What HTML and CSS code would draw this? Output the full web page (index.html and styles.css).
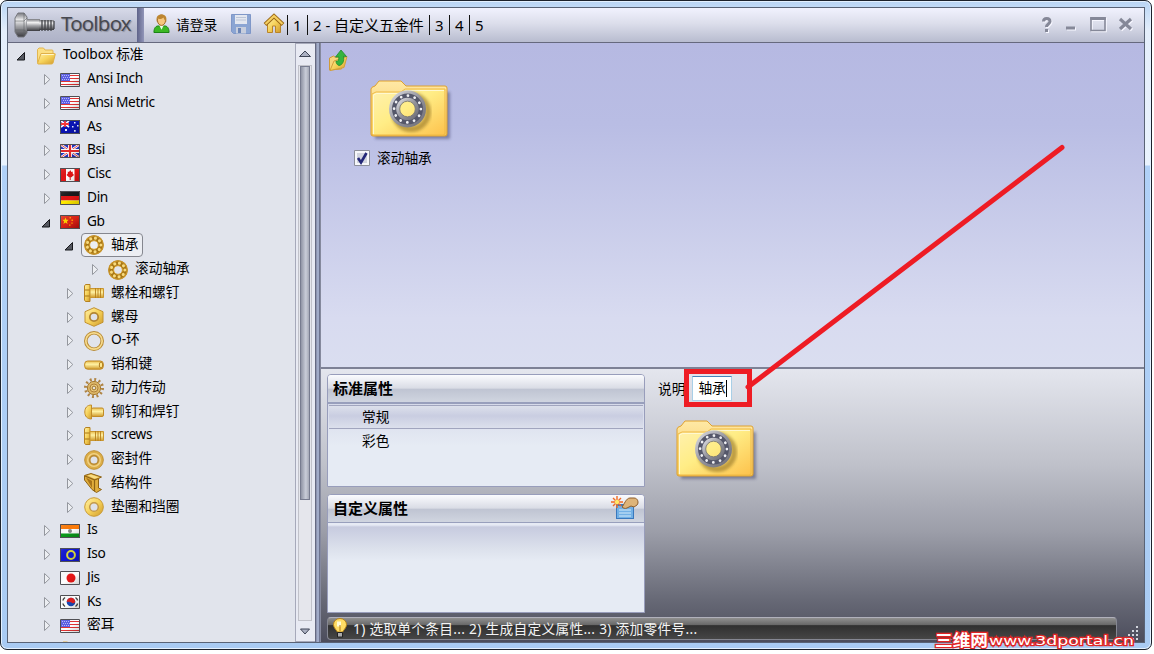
FILE: index.html
```html
<!DOCTYPE html>
<html lang="zh-CN">
<head>
<meta charset="utf-8">
<title>Toolbox</title>
<link rel="stylesheet" href="styles.css">
</head>
<body>
<svg class="defs" width="0" height="0" aria-hidden="true">
  <defs>
    <linearGradient id="gold" x1="0" y1="0" x2="1" y2="1"><stop offset="0" stop-color="#fff0a8"/><stop offset=".5" stop-color="#f6d25a"/><stop offset="1" stop-color="#cf9a2c"/></linearGradient>
    <linearGradient id="goldv" x1="0" y1="0" x2="0" y2="1"><stop offset="0" stop-color="#e8bb4c"/><stop offset=".4" stop-color="#fff2a4"/><stop offset="1" stop-color="#d09a2a"/></linearGradient>
    <linearGradient id="folderg" x1="0" y1="0" x2="1" y2="1"><stop offset="0" stop-color="#fff1b0"/><stop offset=".45" stop-color="#ffed86"/><stop offset="1" stop-color="#fdc24c"/></linearGradient>
    <linearGradient id="foldertab" x1="0" y1="0" x2="0" y2="1"><stop offset="0" stop-color="#ffe9a6"/><stop offset="1" stop-color="#f4c352"/></linearGradient>
    <linearGradient id="steel" x1="0" y1="0" x2="0" y2="1"><stop offset="0" stop-color="#77787e"/><stop offset=".3" stop-color="#f2f2f3"/><stop offset=".55" stop-color="#a5a6aa"/><stop offset="1" stop-color="#3a3a3f"/></linearGradient>
    <linearGradient id="ring" x1="0" y1="0" x2="1" y2="1"><stop offset="0" stop-color="#dcdce2"/><stop offset=".5" stop-color="#94949d"/><stop offset="1" stop-color="#6d6d77"/></linearGradient>
    <linearGradient id="shade" x1="0" y1="0" x2="1" y2="1"><stop offset="0" stop-color="#fff" stop-opacity=".12"/><stop offset=".5" stop-color="#000" stop-opacity="0"/><stop offset="1" stop-color="#000" stop-opacity=".2"/></linearGradient>
    <linearGradient id="redline" x1="0" y1="0" x2="1" y2="1"><stop offset="0" stop-color="#f03a22"/><stop offset="1" stop-color="#c00c0c"/></linearGradient>
    <filter id="soft" x="-10%" y="-20%" width="120%" height="140%"><feGaussianBlur stdDeviation="1.5"/></filter>
  </defs>
  <symbol id="closed" viewBox="0 0 12 14"><path d="M4.500 1.500v10L9.800 6.500z" fill="#eceef2" stroke="#94979e"/></symbol>
  <symbol id="open" viewBox="0 0 12 14"><path d="M9.500 3.500v7.500H2z" fill="#555860" stroke="#17181c"/></symbol>
  <symbol id="frame" viewBox="0 0 20 14"><path d="M0 0h20v14H0z" fill="url(#shade)"/><path d="M.5.5h19v13H.5z" fill="none" stroke="#4f4f54"/></symbol>
  <symbol id="us" viewBox="0 0 20 14"><path d="M0 0h20v14H0z" fill="#fff"/><path d="M1 2.500h18M1 5.500h18M1 8.500h18M1 11.500h18" stroke="#e23434" stroke-width="1.200"/><path d="M1 1h9v7H1z" fill="#5a5ee8"/><path d="M2 2.500h8M3 4.500h7M2 6.500h8" stroke="#b9bbff" stroke-dasharray="1 1"/><use href="#frame"/></symbol>
  <symbol id="au" viewBox="0 0 20 14"><path d="M0 0h20v14H0z" fill="#0a14b4"/><path d="M1 1l8 6M9 1L1 7" stroke="#fff" stroke-width="1.600"/><path d="M5 1v6M1 4h8" stroke="#f33" stroke-width="1.800"/><path d="M5 9h2v2H5zM14 2h1.500v1.500H14zM17 5h1.500v1.500H17zM12 6h1.500v1.500H12zM14 10h1.700v1.700H14z" fill="#e6ecff"/><use href="#frame"/></symbol>
  <symbol id="uk" viewBox="0 0 20 14"><path d="M0 0h20v14H0z" fill="#2430c0"/><path d="M0 0l20 14M20 0L0 14" stroke="#fff" stroke-width="2.400"/><path d="M0 0l20 14M20 0L0 14" stroke="#e13939" stroke-width=".9"/><path d="M10 0v14M0 7h20" stroke="#fff" stroke-width="4"/><path d="M10 0v14M0 7h20" stroke="#e62b2b" stroke-width="2.200"/><use href="#frame"/></symbol>
  <symbol id="ca" viewBox="0 0 20 14"><path d="M0 0h20v14H0z" fill="#e31515"/><path d="M6 0h8.500v14H6z" fill="#fff"/><path d="M10.200 2l1.200 2 1.300-.6v2l1.300 1.600-2.600 2.200h-.7V12h-1V9.200H9L6.500 7l1.300-1.600v-2L9 4z" fill="#e01515"/><use href="#frame"/></symbol>
  <symbol id="de" viewBox="0 0 20 14"><path d="M0 0h20v5H0z" fill="#19191b"/><path d="M0 5h20v4.500H0z" fill="#e01414"/><path d="M0 9.500h20V14H0z" fill="#ffea00"/><use href="#frame"/></symbol>
  <symbol id="cn" viewBox="0 0 20 14"><path d="M0 0h20v14H0z" fill="url(#redline)"/><path d="M5.500 2.500l.9 2.300h2.300L6.900 6.400l.7 2.500-2.100-1.500-2.100 1.500.7-2.500-1.800-1.600h2.300z" fill="#ffd500"/><path d="M9.500 2h1.500v1.400H9.500zM11.500 4.500h1.400v1.400h-1.400zM11.300 7.500h1.400v1.300h-1.400zM9 9.500h1.500v1.300H9z" fill="#ff9e00"/><use href="#frame"/></symbol>
  <symbol id="in" viewBox="0 0 20 14"><path d="M0 0h20v5H0z" fill="#ff7c08"/><path d="M0 5h20v4.500H0z" fill="#fff"/><path d="M0 9.500h20V14H0z" fill="#0a9a1a"/><circle cx="10" cy="7" r="2" fill="#888"/><use href="#frame"/></symbol>
  <symbol id="iso" viewBox="0 0 20 14"><path d="M0 0h20v14H0z" fill="#1117d4"/><circle cx="11" cy="7" r="3.900" fill="none" stroke="#d8d83c" stroke-width="2"/><use href="#frame"/></symbol>
  <symbol id="jp" viewBox="0 0 20 14"><path d="M0 0h20v14H0z" fill="#fff"/><circle cx="11" cy="7" r="4.500" fill="#e81717"/><use href="#frame"/></symbol>
  <symbol id="kr" viewBox="0 0 20 14"><path d="M0 0h20v14H0z" fill="#fff"/><circle cx="11" cy="7" r="4.300" fill="#1a48b4"/><path d="M6.700 7a4.300 4.300 0 0 1 8.600 0c-1.500 1.800-3 1.500-4 .5s-3-1-4.600-.5z" fill="#df2020"/><path d="M5 2.500Q3 4 3 5.500M5 11.500Q3 10 3 8.500M15.500 2.500q2 1.500 2 3M15.500 11.500q2-1.500 2-3" stroke="#444" stroke-width="1.500" fill="none"/><use href="#frame"/></symbol>
  <symbol id="bearing" viewBox="0 0 20 20"><circle cx="10" cy="10" r="6.900" fill="none" stroke="#a87716" stroke-width="5.600"/><circle cx="10" cy="10" r="9.200" fill="none" stroke="#c99428" stroke-width="1.300"/><circle cx="10" cy="10" r="4.400" fill="none" stroke="#d9a436" stroke-width="1"/><circle cx="10" cy="10" r="6.900" fill="none" stroke="#f8da7c" stroke-width="3" stroke-linecap="round" stroke-dasharray=".1 4.717"/></symbol>
  <symbol id="bolt" viewBox="0 0 20 20"><path d="M1.500 1.500h4.500v17H1.500L.5 17V3z" fill="url(#gold)" stroke="#b58120"/><path d="M1 7h5M1 13h5" stroke="#a97718"/><path d="M6 5.500h13.500v9H6z" fill="url(#goldv)" stroke="#c9962f"/><path d="M11.500 5v10M14 5v10M16.500 5v10" stroke="#b77f1b" stroke-width=".9"/></symbol>
  <symbol id="nut" viewBox="0 0 20 20"><path d="M10 .7l9 4v10.600l-9 4-9-4V4.700z" fill="url(#gold)" stroke="#c2922e"/><circle cx="10" cy="10" r="4.200" fill="#dfe2ea" stroke="#b28633" stroke-width="1.800"/></symbol>
  <symbol id="oring" viewBox="0 0 20 20"><circle cx="10" cy="10" r="8.200" fill="none" stroke="#b98c37" stroke-width="3.600"/><circle cx="10" cy="10" r="8.200" fill="none" stroke="#f6da8c" stroke-width="1.700"/></symbol>
  <symbol id="pin" viewBox="0 0 20 20"><rect x=".7" y="6" width="18.600" height="8.200" rx="3" fill="url(#goldv)" stroke="#c08820"/><ellipse cx="17" cy="10" rx="1.700" ry="3" fill="#ffe990" stroke="#b17d1d"/></symbol>
  <symbol id="gear" viewBox="0 0 20 20"><circle cx="10" cy="10" r="8.500" fill="none" stroke="#b08443" stroke-width="3" stroke-dasharray="1.900 2.550"/><circle cx="10" cy="10" r="6.600" fill="#dcb668" stroke="#a67b33"/><circle cx="10" cy="10" r="4" fill="#edce82" stroke="#b0803a"/><circle cx="10" cy="10" r="1.900" fill="#e7e2d8" stroke="#9d722b"/></symbol>
  <symbol id="rivet" viewBox="0 0 20 20"><path d="M7.500 3C3 3 .8 6 .8 10s2.200 7 6.700 7z" fill="url(#gold)" stroke="#c08b28"/><rect x="7.500" y="6" width="12" height="8.500" rx="1.500" fill="url(#goldv)" stroke="#c18c27"/></symbol>
  <symbol id="seal" viewBox="0 0 20 20"><circle cx="10" cy="10" r="9.300" fill="#dcae48" stroke="#bf8f34"/><circle cx="10" cy="10" r="6.300" fill="none" stroke="#f1d389" stroke-width="1.300"/><circle cx="10" cy="10" r="4.200" fill="#dfe2ea" stroke="#b68733" stroke-width="1.400"/></symbol>
  <symbol id="beam" viewBox="0 0 20 20"><path d="M.5 2.500L7 .5l10.500 3.500-3 1.500v9.500l3 1.500-5 3-4.500-3L.5 7z" fill="#e0ad3c" stroke="#8e6315"/><path d="M1 3l9.500 4v11.500M10.500 7l4-1.500" stroke="#8e6315" stroke-width="1.200" fill="none"/><path d="M2 4.500l6 10.500V8z" fill="#a87419"/><path d="M3.500 2.500L7 1.500l8 2.700-4.500 1.600z" fill="#f9dd83"/></symbol>
  <symbol id="washer" viewBox="0 0 20 20"><circle cx="10" cy="10" r="9.300" fill="url(#gold)" stroke="#c99b35"/><circle cx="10" cy="10" r="4.300" fill="#dfe2ea" stroke="#c39a4c" stroke-width="1.500"/></symbol>
  <symbol id="folder" viewBox="0 0 20 20"><path d="M1.500 16.500V3.500L3 2h4.500L9 4h7q1 0 1 1v4z" fill="#fbdf84" stroke="#e2b650"/><path d="M5 7.500h13.500q1 0 .7 1L17 17q-.3 1-1.500 1H2q-.5 0-.3-1z" fill="url(#gold)" stroke="#e0b048"/><path d="M5.500 8.500h12.300" stroke="#fff7cc"/></symbol>
  <symbol id="bigfolder" viewBox="0 0 84 64"><path d="M5 12h75v47H5z" fill="#33355c" opacity=".45" filter="url(#soft)"/><path d="M1 54V9q0-2 4-3l4-5h22l5 5h39q2 0 2 2v46q0 2-2 2H3q-2 0-2-2z" fill="url(#foldertab)" stroke="#dfa12e"/><path d="M2 54V14l4-2h25l4-3h40v44q0 2-2 2H3z" fill="url(#folderg)" stroke="#efb844"/><path d="M3.500 54V15l3-1.500H32l4-3h38" stroke="#fff8d0" fill="none"/>
    <circle cx="41" cy="32" r="17" fill="none" stroke="#7e5f18" stroke-width="6" opacity=".5" filter="url(#soft)"/><circle cx="37.500" cy="29" r="13.300" fill="none" stroke="#55576a" stroke-width="8"/><circle cx="37.500" cy="29" r="17" fill="none" stroke="url(#ring)" stroke-width="3"/><circle cx="37.500" cy="29" r="13.400" fill="none" stroke="#f0f0f4" stroke-width="2.700" stroke-linecap="round" stroke-dasharray=".1 6.916"/><circle cx="37.500" cy="29" r="9.600" fill="none" stroke="url(#ring)" stroke-width="3.400"/><circle cx="37.500" cy="29" r="7.800" fill="none" stroke="#6e6e70" stroke-width=".8"/></symbol>
</svg>

<div class="window">
  <div class="client">
    <header class="titlebar">
      <div class="brand">
        <svg width="46" height="30" viewBox="0 0 46 30"><path d="M2 8l3-5h6l3 4v16l-3 4H5l-3-5z" fill="url(#steel)" stroke="#77787e"/><path d="M2 11h9l3-3M2 20h9l3 2M11 3v23" stroke="#5f6066" fill="none" opacity=".6"/><path d="M14 9h13v12H14z" fill="url(#steel)"/><path d="M26 10h15v10H26z" fill="url(#steel)"/><path d="M29 10v11M32 10v11M35 10v11M38 10v11M41 11v8" stroke="#434449" stroke-width="1.300"/></svg>
        <span class="brand-name">Toolbox</span>
      </div>
      <div class="brand-edge"></div>
      <div class="tools">
        <svg class="user" width="18" height="22" viewBox="0 0 18 22"><path d="M1 20c0-5 2-7 5-7h6c3 0 5 2 5 7z" fill="#3bb824" stroke="#158010"/><path d="M6.500 12L9 17l2.500-5z" fill="#eefbe8"/><ellipse cx="9" cy="7" rx="4.300" ry="5.500" fill="#f6c77e" stroke="#99601a"/><path d="M4 9C3 3 5 1 9 1s6 2 5 8c-1-1-2-3-3-5-2 2-5 2-6 1z" fill="#bd8631"/></svg>
        <span class="login">请登录</span>
        <svg class="save" width="20" height="20" viewBox="0 0 20 20"><path d="M.5.5h19v19h-17l-2-2z" fill="#8ba5d3" stroke="#7f97c8"/><path d="M4 1h12v9H4z" fill="#e3e7f0"/><path d="M5 3.500h10M5 6h10" stroke="#bcc5d6"/><path d="M5 13h10v6.500H5z" fill="#c7cedd"/><path d="M7 14h3v5H7z" fill="#6c85b6"/></svg>
        <svg class="home" width="20" height="20" viewBox="0 0 20 20"><path d="M3.500 9L10 3l6.500 6v9.500h-5V12h-3v6.500h-5z" fill="url(#gold)" stroke="#b98429"/><path d="M1 10.500L10 2l9 8.500" fill="none" stroke="#9b6815" stroke-width="4"/><path d="M1.500 10L10 2l8.500 8" fill="none" stroke="#f5cf61" stroke-width="2.200"/></svg>
        <nav class="steps"><a class="s1">1</a><a class="s2">2 - 自定义五金件</a><a>3</a><a>4</a><a>5</a></nav>
      </div>
      <svg class="controls" width="96" height="18" viewBox="0 0 96 18" fill="none" stroke="#858898"><path d="M5.500 5.500c0-4 6.500-4 6.500 0 0 2.500-3.500 2.500-3.500 5.500M8.500 13v3" stroke-width="3"/><path d="M28 12h9" stroke-width="3"/><path d="M53 2h14v12.500H53z" stroke-width="1.600"/><path d="M52.200 2.500h15.600" stroke-width="3"/><path d="M82 3l11 10M93 3L82 13" stroke-width="3.200"/></svg>
    </header>
    <div class="body">
      <ul class="tree">
        <li class="row l0"><svg class="arrow"><use href="#open"/></svg><svg class="icon"><use href="#folder"/></svg><span class="root">Toolbox 标准</span></li>
        <li class="row l1"><svg class="arrow"><use href="#closed"/></svg><svg class="icon flag"><use href="#us"/></svg><span>Ansi Inch</span></li>
        <li class="row l1"><svg class="arrow"><use href="#closed"/></svg><svg class="icon flag"><use href="#us"/></svg><span>Ansi Metric</span></li>
        <li class="row l1"><svg class="arrow"><use href="#closed"/></svg><svg class="icon flag"><use href="#au"/></svg><span>As</span></li>
        <li class="row l1"><svg class="arrow"><use href="#closed"/></svg><svg class="icon flag"><use href="#uk"/></svg><span>Bsi</span></li>
        <li class="row l1"><svg class="arrow"><use href="#closed"/></svg><svg class="icon flag"><use href="#ca"/></svg><span>Cisc</span></li>
        <li class="row l1"><svg class="arrow"><use href="#closed"/></svg><svg class="icon flag"><use href="#de"/></svg><span>Din</span></li>
        <li class="row l1"><svg class="arrow"><use href="#open"/></svg><svg class="icon flag"><use href="#cn"/></svg><span>Gb</span></li>
        <li class="row l2"><svg class="arrow"><use href="#open"/></svg><div class="selected"><svg class="icon"><use href="#bearing"/></svg><span>轴承</span></div></li>
        <li class="row l3"><svg class="arrow"><use href="#closed"/></svg><svg class="icon"><use href="#bearing"/></svg><span>滚动轴承</span></li>
        <li class="row l2"><svg class="arrow"><use href="#closed"/></svg><svg class="icon"><use href="#bolt"/></svg><span>螺栓和螺钉</span></li>
        <li class="row l2"><svg class="arrow"><use href="#closed"/></svg><svg class="icon"><use href="#nut"/></svg><span>螺母</span></li>
        <li class="row l2"><svg class="arrow"><use href="#closed"/></svg><svg class="icon"><use href="#oring"/></svg><span>O-环</span></li>
        <li class="row l2"><svg class="arrow"><use href="#closed"/></svg><svg class="icon"><use href="#pin"/></svg><span>销和键</span></li>
        <li class="row l2"><svg class="arrow"><use href="#closed"/></svg><svg class="icon"><use href="#gear"/></svg><span>动力传动</span></li>
        <li class="row l2"><svg class="arrow"><use href="#closed"/></svg><svg class="icon"><use href="#rivet"/></svg><span>铆钉和焊钉</span></li>
        <li class="row l2"><svg class="arrow"><use href="#closed"/></svg><svg class="icon"><use href="#bolt"/></svg><span class="screws">screws</span></li>
        <li class="row l2"><svg class="arrow"><use href="#closed"/></svg><svg class="icon"><use href="#seal"/></svg><span>密封件</span></li>
        <li class="row l2"><svg class="arrow"><use href="#closed"/></svg><svg class="icon"><use href="#beam"/></svg><span>结构件</span></li>
        <li class="row l2"><svg class="arrow"><use href="#closed"/></svg><svg class="icon"><use href="#washer"/></svg><span>垫圈和挡圈</span></li>
        <li class="row l1"><svg class="arrow"><use href="#closed"/></svg><svg class="icon flag"><use href="#in"/></svg><span>Is</span></li>
        <li class="row l1"><svg class="arrow"><use href="#closed"/></svg><svg class="icon flag"><use href="#iso"/></svg><span>Iso</span></li>
        <li class="row l1"><svg class="arrow"><use href="#closed"/></svg><svg class="icon flag"><use href="#jp"/></svg><span>Jis</span></li>
        <li class="row l1"><svg class="arrow"><use href="#closed"/></svg><svg class="icon flag"><use href="#kr"/></svg><span>Ks</span></li>
        <li class="row l1"><svg class="arrow"><use href="#closed"/></svg><svg class="icon flag"><use href="#us"/></svg><span class="mil">密耳</span></li>
        <li class="row l1"><svg class="arrow"></svg><svg class="icon"><use href="#folder"/></svg></li>
      </ul>
      <div class="scroll">
        <svg width="20" height="21" viewBox="0 0 20 21"><path d="M4.500 12.500L10 7l5.500 5.500z" fill="#abb0c2" stroke="#3f4556"/></svg>
        <div class="track"><div class="thumb"></div></div>
        <svg width="20" height="20" viewBox="0 0 20 20"><path d="M5.500 8h9L10 13z" fill="#abb0c2" stroke="#3f4556"/></svg>
      </div>
      <div class="splitter"></div>
      <main class="main">
        <section class="browser">
          <svg class="up" width="22" height="24" viewBox="0 0 22 24"><path d="M1.500 21V9l4-2 2 1.500 8-1.500-2 13z" fill="#f6d47a" stroke="#d09a38"/><path d="M6 12l13-4.500-3 11L2 21.500z" fill="url(#gold)" stroke="#d39f3a"/><path d="M7.500 8L13 1l5.500 6.500-3-.3c1 5-1 8.800-4.500 9.300C9 16 8 14 8 12c2 1 3-1 2.800-4z" fill="#35b43d" stroke="#1d8a2a" stroke-width=".8"/></svg>
          <div class="item">
            <svg class="big" width="84" height="64"><use href="#bigfolder"/></svg>
            <label class="check"><svg width="16" height="16" viewBox="0 0 16 16"><path d="M.5.500h15v15H.5z" fill="#f6f7fa" stroke="#8c8f9b"/><path d="M3 3h10v10H3z" fill="#d2d5df"/><path d="M4 8l3 4.500L12.500 3" fill="none" stroke="#242878" stroke-width="2.600"/></svg><span>滚动轴承</span></label>
          </div>
        </section>
        <section class="details">
          <div class="props">
            <div class="panel first">
              <h2>标准属性</h2>
              <div class="panel-body"><div class="prop current">常规</div><div class="prop">彩色</div></div>
            </div>
            <div class="panel second">
              <h2>自定义属性<svg width="28" height="24" viewBox="0 0 28 24"><path d="M5 8h18v15H5z" fill="#3978bd"/><path d="M6 10h16v12H6z" fill="#72b0e5"/><path d="M8 14h12M8 17h12M8 20h12" stroke="#d4ebfa"/><path d="M11 11c2-2 4-9 8-9h4c4 0 5 5 3 7l-3 2-3-1-4 2c-2 1-4 0-5-1z" fill="#deb479" stroke="#8e5d2b"/><path d="M6 0v12M0 6h12M2 2l8 8M10 2l-8 8" stroke="#f36a20" stroke-width="1.400"/><circle cx="6" cy="6" r="2.200" fill="#ffe969"/></svg></h2>
              <div class="panel-body"></div>
            </div>
          </div>
          <div class="preview">
            <div class="field"><span>说明</span><div class="input">轴承<i class="caret"></i></div></div>
            <svg class="big" width="84" height="64"><use href="#bigfolder"/></svg>
          </div>
          <footer class="hint"><svg width="14" height="21" viewBox="0 0 14 21"><path d="M4.500 14C2 10.500.5 9 .5 6.500a6.500 6 0 0 1 13 0C13.500 9 12 10.500 9.500 14z" fill="#ffdd65" stroke="#b7841a"/><path d="M4 3.500h4v5H4z" fill="#fffbd5"/><path d="M7 7v6" stroke="#b37812"/><path d="M4.500 14.500h5v4.500h-5z" fill="#aaa" stroke="#222"/></svg><span>1) 选取单个条目... 2) 生成自定义属性... 3) 添加零件号...</span></footer>
          <svg class="grip" width="11" height="14" viewBox="0 0 11 14" fill="#d4d7df"><path d="M8 0h2v2H8zM8 4h2v2H8zM4 4h2v2H4zM8 8h2v2H8zM4 8h2v2H4zM0 8h2v2H0zM8 12h2v2H8zM4 12h2v2H4zM0 12h2v2H0z"/></svg>
        </section>
      </main>
    </div>
  </div>
</div>
<svg class="markup" width="1154" height="654" viewBox="0 0 1154 654">
  <path d="M748 387L1062 147.500" stroke="#ee1c24" stroke-width="5" stroke-linecap="round"/>
  <path d="M686.500 371.500h63v33h-63z" fill="none" stroke="#ee1c24" stroke-width="5"/>
  <text class="watermark cjk" x="935" y="646" textLength="53" lengthAdjust="spacingAndGlyphs">三维网</text>
  <text class="watermark" x="989" y="645" textLength="145" lengthAdjust="spacingAndGlyphs">www.3dportal.cn</text>
</svg>
</body>
</html>
```
FILE: styles.css
```css
* { box-sizing: border-box; }
body {
  margin: 0;
  width: 1154px;
  height: 654px;
  overflow: hidden;
  background: #fff;
  color: #000;
  font: 13.7px/1 "Noto Sans", "Noto Sans CJK SC", sans-serif;
}
svg { display: block; flex: none; overflow: visible; }
.defs { position: absolute; }
span, a { white-space: nowrap; }

.window {
  width: 1152px;
  height: 650px;
  padding: 6px;
  border: 1px solid #1d232d;
  border-radius: 7px;
  background: linear-gradient(#b9d5f5 0, #e4eefb 30px, #e9f3fe 164px, #b0d1f8 165px, #a9cbf3 100%);
  box-shadow: inset 0 0 0 1px #e4f1ff;
}
.client {
  display: flex;
  flex-direction: column;
  width: 1138px;
  height: 636px;
  border: 1px solid #596376;
}

/* Title bar */
.titlebar {
  display: flex;
  height: 35px;
  background: linear-gradient(#f1f2fe, #dcdeeb 45%, #b8bccf);
  border-bottom: 1px solid #66697e;
}
.brand {
  display: flex;
  align-items: center;
  width: 129px;
  padding-left: 5px;
  background: linear-gradient(#d7dae9, #b9bdcf 60%, #aeb2c7);
}
.brand svg { margin-top: -1px; }
.brand-name { margin: -3px 0 0 2px; font-size: 20.5px; letter-spacing: -.8px; color: #484950; text-shadow: 1px 1px 1px #8d90a1; }
.brand-edge { width: 7px; background: linear-gradient(90deg, #5f6389, #9195b8); }
.tools { display: flex; flex: 1; align-items: flex-start; padding-left: 9px; }
.user { margin-top: 5px; width: 17px; }
.login { margin: 10px 0 0 6px; }
.save { margin: 6px 0 0 14px; }
.home { margin: 6px 0 0 13px; }
.steps { display: flex; margin: 7px 0 0 3px; font-size: 15px; line-height: 20px; }
.steps a { width: 20px; padding-left: 5px; border-left: 1px solid #111; }
.steps .s2 { width: 122px; letter-spacing: -.05px; }
.controls { margin: 8px 10px 0 0; filter: drop-shadow(1px 1px 0 #f6f6ff); }

/* Component tree */
.body { display: flex; flex: 1; min-height: 0; }
.tree { width: 287px; height: 599px; margin: 0; padding: 0; overflow: hidden; list-style: none; background: #e1e4ec; }
.row { display: flex; align-items: center; height: 23.75px; }
.row span { margin-left: 7px; line-height: 20px; margin-top: -1px; }
.row .root { letter-spacing: -.1px; }
.l0 { padding-left: 9px; }
.l1 { padding-left: 32px; }
.l1 span { letter-spacing: -.36px; }
.l1 .mil { letter-spacing: 0; }
.l2 { padding-left: 55px; }
.l2 .screws { letter-spacing: -.35px; }
.l3 { padding-left: 80px; }
.arrow { width: 12px; height: 14px; margin-right: 8px; margin-top: 3px; }
.l2 .arrow { margin-right: 9px; }
.l0 .arrow { margin-left: -2px; margin-right: 9px; }
.icon { width: 20px; height: 20px; margin-top: 2px; }
.flag { height: 14px; margin-top: 2px; }
.selected {
  display: flex;
  align-items: center;
  height: 24px;
  margin: 1px 0 0 -3px;
  padding: 0 4px 0 2px;
  border: 1px solid #85878f;
  border-radius: 4px;
  background: #eceef3;
}
.selected .icon { margin-top: 0; }
.selected span { margin-top: -3px; }

.scroll { display: flex; flex-direction: column; width: 20px; height: 599px; border: 1px solid #a6a9ba; border-width: 1px 0 1px 1px; background: #e8eaf3; }
.scroll > svg { margin-left: -1px; }
.track { flex: 1; width: 14px; margin-left: 2px; padding: 0 1px; border: 1px solid #c1c2ca; background: #e5e6ec; }
.thumb { height: 434px; border: 1px solid #777c90; background: linear-gradient(90deg, #8f94a5, #c9cdd9 60%, #a4a8b6); }
.splitter { width: 6px; background: linear-gradient(90deg, #656981 0 1px, #8d94af 1px 2px, #a1abc8 2px 4px, #6e7490 4px 5px, #85899d 5px); }

/* Browser pane */
.main { display: flex; flex: 1; flex-direction: column; }
.browser { display: flex; align-items: flex-start; height: 326px; padding: 6px 0 0 7px; border-bottom: 2px solid #7d8195; background: linear-gradient(#b6b9e2, #b9bde4 25%, #d8dbf0 85%, #dadef0); }
.item { margin: 31px 0 0 4px; }
.item .big { margin-left: 16px; }
.check { display: flex; margin-top: 5px; height: 17px; align-items: center; }
.check span { margin-left: 7px; line-height: 16px; }

/* Details pane */
.details {
  display: grid;
  grid-template-columns: 318px 1fr 14px;
  grid-template-rows: 248px 23px;
  flex: 1;
  padding-left: 6px;
  background: linear-gradient(#e4e6ee 0, #bfc1ca 35%, #9b9da8 60%, #666875 85%, #4c4d5c);
}
.props { padding-top: 5px; }
.panel { display: flex; flex-direction: column; border: 1px solid #989dbb; border-radius: 4px 4px 0 0; background: #e6ebf4; }
.first { height: 113px; }
.second { height: 119px; margin-top: 7px; }
.panel h2 {
  display: flex;
  justify-content: space-between;
  height: 28px;
  margin: 0;
  padding: 0 5px;
  border-bottom: 1px solid #989fbc;
  border-radius: 3px 3px 0 0;
  background: linear-gradient(#fafbfe, #d9dce5 49%, #bfc4d2 52%, #d0d5e0);
  font-size: 15px;
  line-height: 26px;
}
.panel h2 svg { margin-top: 1px; }
.panel-body { flex: 1; background: linear-gradient(#e6eaf4 0, #e6eaf4 2px, #c7cbdf 4px, #dce1ec 26px, #e6ebf4 38px); }
.prop { height: 24px; padding-left: 33px; line-height: 24px; }
.first .panel-body { padding: 1px; border-top: 1px solid #989fbc; background: linear-gradient(#d6daea, #e6ebf4 42px); }
.current { border: solid #a1a5be; border-width: 1px 0; line-height: 22px; background: linear-gradient(#dce0eb, #c9cde1 45%, #dce0ec); }
.preview { padding: 7px 0 0 13px; }
.field { display: flex; height: 25px; }
.field span { line-height: 25px; }
.input { display: flex; width: 40px; height: 25px; margin-left: 7px; padding-left: 5px; border: 1px solid #a9cfe7; border-top-color: #4583b9; background: #fff; line-height: 21px; }
.caret { width: 1px; height: 17px; margin-top: 3px; background: #000; flex: none; }
.preview .big { margin: 19px 0 0 18px; }
.hint {
  display: flex;
  grid-column: 1 / 3;
  width: 790px;
  height: 23px;
  padding-left: 5px;
  border: 1px solid #858792;
  border-top-color: #b0b0bb;
  border-radius: 4px;
  background: linear-gradient(#909090 0, #666 34%, #303030 36%, #464646);
  color: #f4f4f4;
}
.hint span { margin-left: 6px; line-height: 22px; letter-spacing: .3px; }
.grip { align-self: end; margin-left: -2px; }

/* Annotation */
.markup { position: absolute; left: 0; top: 0; pointer-events: none; }
.watermark { fill: #fff; stroke: #e02525; stroke-width: 2.400px; paint-order: stroke; font: 500 13px "DejaVu Sans", sans-serif; }
.cjk { font: bold 16px "Noto Sans CJK SC", sans-serif; }
```
